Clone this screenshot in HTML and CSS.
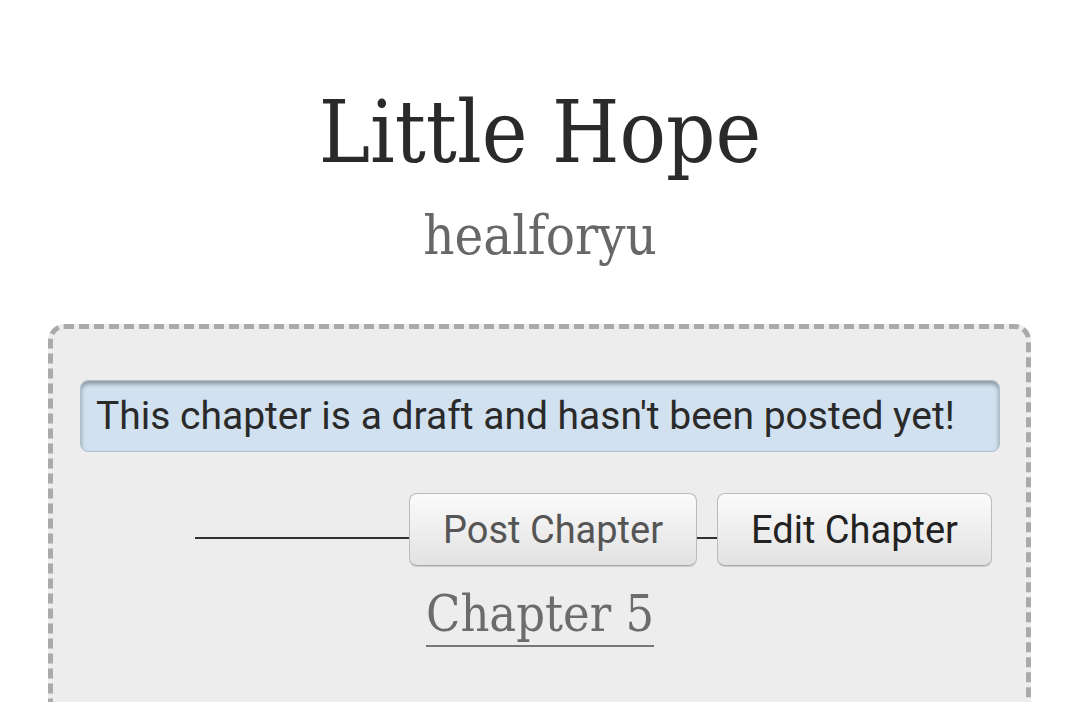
FILE: index.html
```html
<!DOCTYPE html>
<html>
<head>
<meta charset="utf-8">
<link rel="stylesheet" href="styles.css">
</head>
<body>
<div class="page">
  <header class="preface">
    <h2 class="title">Little Hope</h2>
    <h3 class="byline">healforyu</h3>
  </header>
  <div class="chapter-box">
    <p class="notice">This chapter is a draft and hasn't been posted yet!</p>
    <div class="actions">
      <span class="rule rule-long"></span>
      <button class="btn btn-post">Post Chapter</button>
      <span class="rule rule-short"></span>
      <button class="btn btn-edit">Edit Chapter</button>
    </div>
    <h3 class="chapter-title"><a href="#">Chapter 5</a></h3>
  </div>
</div>
</body>
</html>
```
FILE: styles.css
```css
html, body {
  margin: 0;
  padding: 0;
  background: #fff;
  overflow: hidden;
}
.page {
  width: 1080px;
  height: 702px;
  overflow: hidden;
}
.preface {
  display: flex;
  flex-direction: column;
  align-items: center;
  padding-top: 80px;
}
.title {
  margin: 0;
  font-family: "DejaVu Serif Condensed", "DejaVu Serif", serif;
  font-weight: normal;
  font-size: 86px;
  line-height: 104px;
  color: #2a2a2a;
}
.byline {
  margin: 0;
  margin-top: 20px;
  font-family: "DejaVu Serif Condensed", "DejaVu Serif", serif;
  font-weight: normal;
  font-size: 54px;
  line-height: 64px;
  color: #676767;
}
.chapter-box {
  box-sizing: border-box;
  margin: 56px 0 0 48px;
  width: 983px;
  height: 440px;
  border: 5px dashed #aaa;
  border-radius: 16px;
  background: #ededed;
  padding: 51px 26px 0 27px;
}
.notice {
  margin: 0;
  height: 72px;
  box-sizing: border-box;
  display: flex;
  align-items: center;
  padding-left: 15px;
  background: #d1e1ef;
  border: 1px solid #b3c1cd;
  border-radius: 8px;
  box-shadow: inset 0 3px 4px rgba(0, 0, 0, 0.35);
  font-family: Roboto, "Noto Sans", sans-serif;
  font-size: 39px;
  color: #2a2a2a;
}
.actions {
  display: flex;
  align-items: flex-start;
  margin-top: 41px;
  padding-left: 115px;
  padding-right: 8px;
}
.rule {
  height: 2px;
  margin-top: 44px;
  background: #333;
  display: block;
}
.rule-long { flex: 1; }
.rule-short { width: 20px; }
.btn {
  height: 73px;
  padding: 0 33px;
  border: 1px solid #bbb;
  border-bottom-color: #aaa;
  border-radius: 8px;
  background: linear-gradient(#fbfbfb, #e2e2e2);
  box-shadow: 0 1px 0 #ccc;
  font-family: Roboto, "Noto Sans", sans-serif;
  font-size: 38px;
  line-height: 1;
}
.btn-post { color: #555; }
.btn-edit { color: #222; }
.chapter-title {
  margin: 17px 0 0;
  text-align: center;
  font-family: "DejaVu Serif Condensed", "DejaVu Serif", serif;
  font-weight: normal;
  font-size: 50px;
  line-height: 62px;
}
.chapter-title a {
  color: #6c6c6c;
  text-decoration: none;
  border-bottom: 2px solid #777;
  padding-bottom: 2px;
}
```
